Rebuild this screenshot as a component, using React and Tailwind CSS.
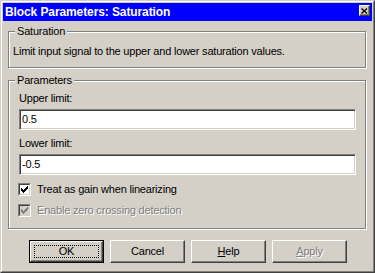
const CHECK_TOPS = [2, 3, 4, 3, 2, 1, 0];

function CheckMark({ color }) {
  return (
    <svg width="9" height="9" viewBox="0 0 9 9" shapeRendering="crispEdges">
      {CHECK_TOPS.map((t, i) => (
        <rect key={i} x={1 + i} y={1 + t} width="1" height="3" fill={color} />
      ))}
    </svg>
  );
}

function Checkbox({ label, disabled }) {
  return (
    <div className="flex items-center h-[13px] -ml-px">
      <div className="w-[13px] h-[13px] border border-t-[#808080] border-l-[#808080] border-b-white border-r-white">
        <div
          className={
            "w-full h-full border border-t-[#404040] border-l-[#404040] border-b-[#d4d0c8] border-r-[#d4d0c8] " +
            (disabled ? "bg-[#d4d0c8]" : "bg-white")
          }
        >
          <CheckMark color={disabled ? "#808080" : "#000000"} />
        </div>
      </div>
      <span
        className={
          "ml-[6px] leading-[13px] " +
          (disabled ? "text-[#808080] [text-shadow:1px_1px_0_#ffffff]" : "")
        }
      >
        {label}
      </span>
    </div>
  );
}

function Field({ value }) {
  return (
    <div className="h-[21px] flex items-center pl-[2px] bg-white border border-t-[#808080] border-l-[#808080] border-b-white border-r-white shadow-[inset_1px_1px_0_#404040,inset_-1px_-1px_0_#d4d0c8]">
      {value}
    </div>
  );
}

function Button({ children, isDefault, disabled }) {
  const face = (
    <div className="relative w-full h-full flex items-center justify-center border border-t-white border-l-white border-b-[#404040] border-r-[#404040] shadow-[inset_-1px_-1px_0_#808080]">
      <span
        className={
          disabled ? "text-[#808080] [text-shadow:1px_1px_0_#ffffff]" : ""
        }
      >
        {children}
      </span>
      {isDefault && (
        <div className="absolute inset-[3px] border border-dotted border-black" />
      )}
    </div>
  );
  return (
    <div
      className={
        "w-[75px] h-[23px] " + (isDefault ? "border border-black" : "")
      }
    >
      {face}
    </div>
  );
}

export default function App() {
  return (
    <div className="w-[375px] h-[273px] font-['Liberation_Sans',Arial,sans-serif] text-[11px] tracking-[-0.2px] text-black">
      <div className="h-full border border-t-[#d4d0c8] border-l-[#d4d0c8] border-b-[#404040] border-r-[#404040]">
        <div className="h-full flex flex-col p-px bg-[#d4d0c8] border border-t-white border-l-white border-b-[#808080] border-r-[#808080]">
          {/* title bar */}
          <div className="h-[18px] bg-[#0000ff] flex items-start justify-between pl-[2px] pr-[2px]">
            <span className="mt-[2px] text-white font-bold text-[12px] leading-[14px] tracking-[-0.1px]">
              Block Parameters: Saturation
            </span>
            <div className="mt-[2px] w-[11px] h-[11px] flex items-center justify-center bg-[#d4d0c8] border border-t-white border-l-white border-b-[#404040] border-r-[#404040] shadow-[inset_-1px_-1px_0_#808080]">
              <svg width="7" height="6" viewBox="0 0 7 6">
                <path d="M0.5 0.5 L6 5.5 M6 0.5 L0.5 5.5" stroke="#000" strokeWidth="1.3" />
              </svg>
            </div>
          </div>

          <fieldset className="mt-[4px] ml-[5px] mr-[6px] border border-[#808080] shadow-[inset_1px_1px_0_#ffffff,1px_1px_0_#ffffff]">
            <legend className="ml-[6px] px-[2px] leading-[13px] bg-[#d4d0c8]">
              Saturation
            </legend>
            <div className="pl-[4px] pt-[7px] pb-[9px]">
              <p className="leading-[13px]">
                Limit input signal to the upper and lower saturation values.
              </p>
            </div>
          </fieldset>

          <fieldset className="mt-[6px] ml-[5px] mr-[6px] border border-[#808080] shadow-[inset_1px_1px_0_#ffffff,1px_1px_0_#ffffff]">
            <legend className="ml-[6px] px-[2px] leading-[13px] bg-[#d4d0c8]">
              Parameters
            </legend>
            <div className="pl-[10px] pr-[9px] pt-[5px] pb-[11px] flex flex-col">
              <div className="leading-[13px]">Upper limit:</div>
              <div className="mt-[4px]">
                <Field value="0.5" />
              </div>
              <div className="mt-[7px] leading-[13px]">Lower limit:</div>
              <div className="mt-[4px]">
                <Field value="-0.5" />
              </div>
              <div className="mt-[8px]">
                <Checkbox label="Treat as gain when linearizing" />
              </div>
              <div className="mt-[8px]">
                <Checkbox label="Enable zero crossing detection" disabled />
              </div>
            </div>
          </fieldset>

          <div className="mt-[11px] pl-[26px] flex gap-[6px]">
            <Button isDefault>OK</Button>
            <Button>Cancel</Button>
            <Button>
              <span className="underline">H</span>elp
            </Button>
            <Button disabled>
              <span className="underline">A</span>pply
            </Button>
          </div>
        </div>
      </div>
    </div>
  );
}
